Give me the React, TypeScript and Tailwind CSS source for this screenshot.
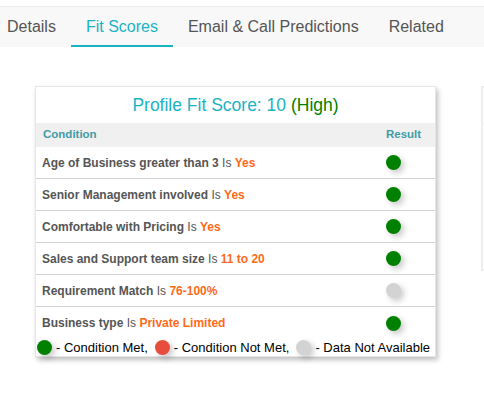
const tabs = ["Details", "Fit Scores", "Email & Call Predictions", "Related"];

type Row = { label: string; value: string; status: "met" | "na" };

const rows: Row[] = [
  { label: "Age of Business greater than 3", value: "Yes", status: "met" },
  { label: "Senior Management involved", value: "Yes", status: "met" },
  { label: "Comfortable with Pricing", value: "Yes", status: "met" },
  { label: "Sales and Support team size", value: "11 to 20", status: "met" },
  { label: "Requirement Match", value: "76-100%", status: "na" },
  { label: "Business type", value: "Private Limited", status: "met" },
];

function Dot({ color }: { color: "green" | "red" | "gray" }) {
  const bg =
    color === "green" ? "bg-[#008000]" : color === "red" ? "bg-[#e74c3c]" : "bg-[#d3d3d3]";
  return (
    <span
      className={`inline-block w-[15px] h-[15px] rounded-full shrink-0 shadow-[3px_3px_6px_rgba(0,0,0,0.22)] ${bg}`}
    />
  );
}

export default function App() {
  return (
    <div className="w-[484px] h-[399px] overflow-hidden bg-white font-['Liberation_Sans',Arial,sans-serif]">
      {/* tab strip */}
      <div className="mt-[6px] border-t border-[#ececec] bg-[#f8f8f8] h-[41px] flex ml-[-8px]">
        {tabs.map((t) => {
          const active = t === "Fit Scores";
          return (
            <div
              key={t}
              className={`relative flex items-center px-[15px] text-[16px] whitespace-nowrap ${
                active ? "text-[#1ab3c3]" : "text-[#555]"
              }`}
            >
              {t}
              {active && <span className="absolute left-0 right-0 bottom-0 h-[2.5px] bg-[#1ab3c3]" />}
            </div>
          );
        })}
      </div>

      <div className="flex items-start gap-[45px] pl-[35px] mt-[39px]">
        {/* fit score card */}
        <div className="w-[401px] shrink-0 border border-[#e6e6e6] bg-white shadow-[2px_3px_5px_rgba(0,0,0,0.25)]">
          <div className="h-[36px] flex items-center justify-center text-[17.5px] text-[#1ab3c3]">
            Profile Fit Score: 10&nbsp;<span className="text-[#008000]">(High)</span>
          </div>

          <div className="h-[24px] bg-[#f0f0f0] flex items-center text-[11.5px] font-bold text-[#3f9ba6]">
            <div className="flex-1 pl-[7px]">Condition</div>
            <div className="w-[49px]">Result</div>
          </div>

          {rows.map((r, i) => (
            <div
              key={r.label}
              className={`h-[32px] flex items-center text-[12px] text-[#555] ${
                i < rows.length - 1 ? "border-b border-[#d4d4d4]" : ""
              }`}
            >
              <div className="flex-1 pl-[6px] whitespace-nowrap">
                <span className="font-bold">{r.label}</span> Is{" "}
                <span className="font-bold text-[#ff6a1a]">{r.value}</span>
              </div>
              <div className="w-[49px] flex items-center">
                <Dot color={r.status === "met" ? "green" : "gray"} />
              </div>
            </div>
          ))}

          <div className="h-[17px] flex items-center pl-[1px] text-[13px] text-black whitespace-nowrap">
            <Dot color="green" />
            <span className="ml-[4px]">- Condition Met,</span>
            <span className="ml-[7px]" />
            <Dot color="red" />
            <span className="ml-[4px]">- Condition Not Met,</span>
            <span className="ml-[7px]" />
            <Dot color="gray" />
            <span className="ml-[4px]">- Data Not Available</span>
          </div>
        </div>

        {/* next card, cut off by the window */}
        <div className="w-[200px] h-[185px] shrink-0 border-2 border-[#eeeeee] bg-white">
          <div className="h-[36px] border-b border-[#eeeeee]" />
        </div>
      </div>
    </div>
  );
}
